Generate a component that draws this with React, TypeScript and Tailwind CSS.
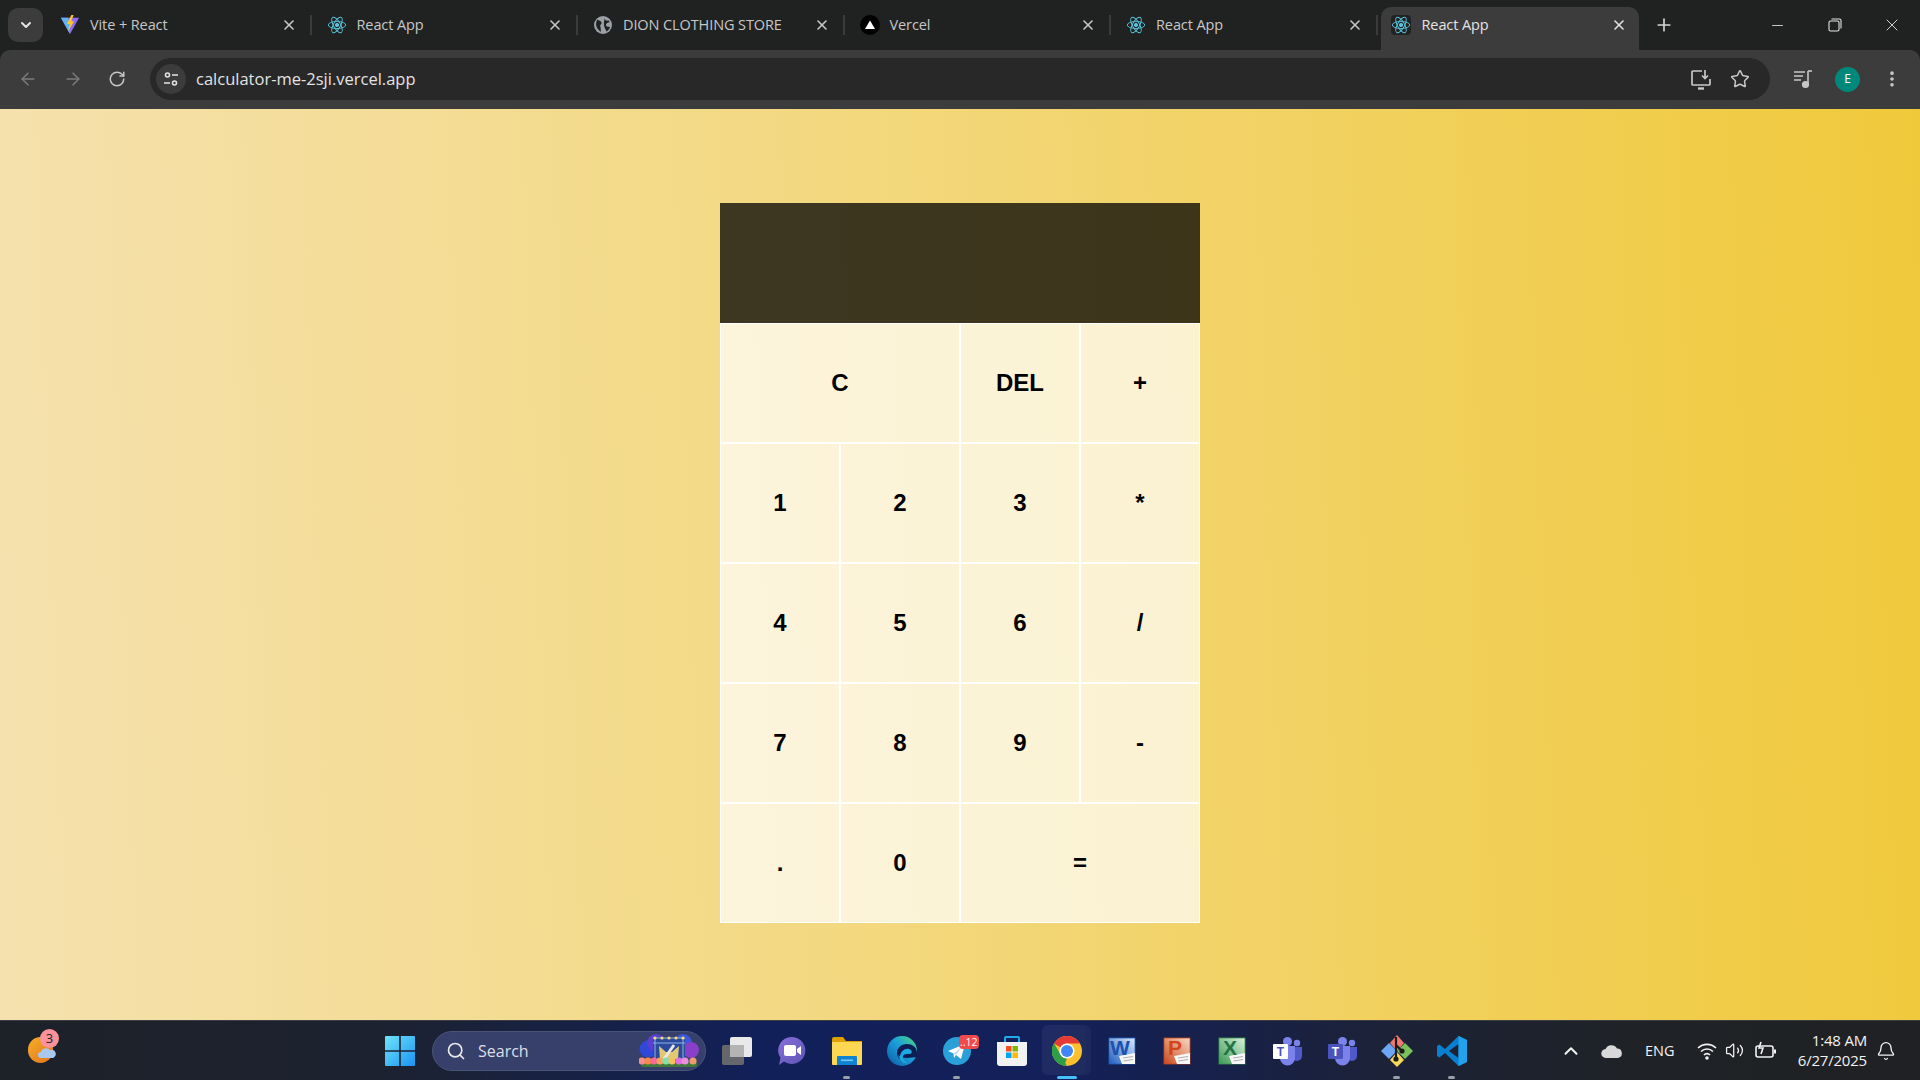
import React from "react";
import { ArrowLeft, ArrowRight, RotateCw, X, Plus, Minus, Star, Search, ChevronUp, ChevronDown, Bell, Volume2, EllipsisVertical } from "lucide-react";

const Atom = ({ boxed }: { boxed?: boolean }) => (
  <svg width="20" height="20" viewBox="-12 -12 24 24" fill="none" stroke="#58c4dc" strokeWidth="1.1" className={boxed ? "bg-[#222] rounded-sm" : ""}>
    <circle r="2" fill="#58c4dc" />
    <ellipse rx="10.5" ry="4.2" />
    <ellipse rx="10.5" ry="4.2" transform="rotate(60)" />
    <ellipse rx="10.5" ry="4.2" transform="rotate(120)" />
  </svg>
);

const ViteIcon = () => (
  <svg width="22" height="22" viewBox="0 0 22 22">
    <path d="M1 3 L21 3 L11 21 Z" fill="#8f6cf7" />
    <path d="M1 3 L9 3 L11 21 Z" fill="#5fb4f6" />
    <path d="M12.5 0 L7.5 10 L10.5 10 L9 18 L15.5 7 L12.5 7 L15 0 Z" fill="#fdc81f" />
  </svg>
);

const GlobeIcon = () => (
  <svg width="18" height="18" viewBox="0 0 18 18">
    <circle cx="9" cy="9" r="9" fill="#9aa0a6" />
    <path d="M3 3.5 C5 5 7 4.5 7.5 6.5 C8 8.5 5.5 8.5 6.5 11 C7 12.5 6.5 14 7 16 C4 14 2 11 2 8 Z M11 2 C10.5 4 12 5 14.5 4.5 L15.8 6 C13.5 6.5 11.5 7.5 12 9.5 C12.5 11 15 10.5 16 11 C15.5 13 14 14.5 12.5 15.5 C11.5 13 10 11 10 9 C9.8 7 10 4 11 2 Z" fill="#202222" />
  </svg>
);

const VercelIcon = () => (
  <svg width="20" height="20" viewBox="0 0 20 20">
    <circle cx="10" cy="10" r="10" fill="#000" />
    <path d="M10 5.5 L15 14 L5 14 Z" fill="#fff" />
  </svg>
);

const tabs = [
  { title: "Vite + React", icon: <ViteIcon /> },
  { title: "React App", icon: <Atom /> },
  { title: "DION CLOTHING STORE", icon: <GlobeIcon /> },
  { title: "Vercel", icon: <VercelIcon /> },
  { title: "React App", icon: <Atom /> },
];

const Tab = ({ title, icon }: { title: string; icon: React.ReactNode }) => (
  <div className="w-[266.5px] h-full flex items-center shrink-0">
    <div className="w-5 ml-[15px] flex justify-center">{icon}</div>
    <span className="ml-[10px] flex-1 text-[14.5px] text-[#c7c7c7] tracking-[-0.1px]">{title}</span>
    <X size={16} strokeWidth={2.4} className="text-[#c7c7c7] mr-[13px]" />
    <div className="w-[2px] h-5 bg-[#3a3c3c]" />
  </div>
);

const TabStrip = () => (
  <div className="h-[50px] bg-[#202222] flex items-stretch shrink-0 font-['Open_Sans',sans-serif]">
    <div className="w-[45px] flex items-center">
      <div className="ml-2 w-[35px] h-[34px] rounded-[10px] bg-[#3c3c3c] flex items-center justify-center">
        <ChevronDown size={16} strokeWidth={3} className="text-[#e3e3e3]" />
      </div>
    </div>
    {tabs.map((t, i) => (
      <Tab key={i} title={t.title} icon={t.icon} />
    ))}
    <div className="relative mt-[7px] ml-[3px] w-[258px] bg-[#3c3c3c] rounded-t-[10px] flex items-center pb-[7px] text-[#e3e3e3]">
      <div className="ml-[10px]"><Atom boxed /></div>
      <span className="ml-[11px] flex-1 text-[14.5px] tracking-[-0.1px]">React App</span>
      <X size={16} strokeWidth={2.4} className="mr-[12px]" />
    </div>
    <div className="flex items-center ml-[15px]">
      <Plus size={20} strokeWidth={2} className="text-[#d5d5d5]" />
    </div>
    <div className="ml-auto flex items-center text-[#e3e3e3]">
      <div className="w-[57px] flex justify-center"><Minus size={17} strokeWidth={1.2} /></div>
      <div className="w-[57px] flex justify-center">
        <svg width="14" height="14" viewBox="0 0 14 14" fill="none" stroke="currentColor" strokeWidth="1.1">
          <rect x="1" y="3" width="10" height="10" rx="1.5" />
          <path d="M3.5 1 H11.5 A1.5 1.5 0 0 1 13 2.5 V10.5" />
        </svg>
      </div>
      <div className="w-[57px] flex justify-center"><X size={20} strokeWidth={1.1} /></div>
    </div>
  </div>
);

const Toolbar = () => (
  <div className="h-[59px] bg-[#202222] shrink-0">
    <div className="h-full bg-[#3c3c3c] rounded-t-[10px] flex items-center">
      <div className="w-[150px] flex items-center pl-[18px] gap-[25px] -mt-[1px]">
        <ArrowLeft size={20} strokeWidth={1.8} className="text-[#7b7b7b]" />
        <ArrowRight size={20} strokeWidth={1.8} className="text-[#7b7b7b]" />
        <RotateCw size={18} strokeWidth={2} className="text-[#c7c7c7]" />
      </div>
      <div className="w-[1620px] h-[42px] -mt-[1px] bg-[#282828] rounded-full flex items-center">
        <div className="ml-[6px] w-[30px] h-[30px] rounded-full bg-[#3c3c3c] flex items-center justify-center">
          <svg width="16" height="16" viewBox="0 0 16 16" fill="none" stroke="#e3e3e3" strokeWidth="1.6">
            <circle cx="4.5" cy="4" r="2" />
            <path d="M9 4 H15 M1 12 H7" />
            <circle cx="11.5" cy="12" r="2" />
          </svg>
        </div>
        <span className="ml-[10px] flex-1 font-['Open_Sans',sans-serif] text-[16.5px] text-[#e3e3e3]">calculator-me-2sji.vercel.app</span>
        <svg width="22" height="22" viewBox="0 0 22 22" fill="none" stroke="#c7c7c7" strokeWidth="1.7">
          <path d="M12 3 H3 A1 1 0 0 0 2 4 V16 A1 1 0 0 0 3 17 H19 A1 1 0 0 0 20 16 V11" />
          <path d="M8 20.5 H14" strokeWidth="2.4" />
          <path d="M15 2 V10 M12 7.5 L15 10.5 L18 7.5" />
        </svg>
        <Star size={20} strokeWidth={1.8} className="ml-[18px] mr-[20px] text-[#c7c7c7]" />
      </div>
      <div className="flex items-center -mt-[1px]">
        <svg width="20" height="20" viewBox="0 0 20 20" className="ml-[23px] text-[#c7c7c7]" fill="none" stroke="currentColor" strokeWidth="1.6">
          <path d="M1 3 H12 M1 7 H10 M1 11 H8" />
          <path d="M15 2 V15" />
          <path d="M15 2 H19" />
          <circle cx="12.5" cy="15.5" r="2.8" fill="currentColor" />
        </svg>
        <div className="ml-[22px] w-[25px] h-[25px] rounded-full bg-[#00897b] text-white text-[12px] font-['Open_Sans',sans-serif] flex items-center justify-center">E</div>
        <EllipsisVertical size={20} strokeWidth={2.4} className="ml-[22px] text-[#c7c7c7]" />
      </div>
    </div>
  </div>
);

const keys = [
  { k: "C", wide: true }, { k: "DEL" }, { k: "+" },
  { k: "1" }, { k: "2" }, { k: "3" }, { k: "*" },
  { k: "4" }, { k: "5" }, { k: "6" }, { k: "/" },
  { k: "7" }, { k: "8" }, { k: "9" }, { k: "-" },
  { k: "." }, { k: "0" }, { k: "=", wide: true },
];

const Calculator = () => (
  <div className="grid grid-cols-[repeat(4,120px)] auto-rows-[120px] font-['Liberation_Sans',sans-serif]">
    <div className="col-span-4 bg-black/75" />
    {keys.map((b) => (
      <button
        key={b.k}
        className={`border border-white bg-white/70 text-[24px] font-bold text-black ${b.wide ? "col-span-2" : ""}`}
      >
        {b.k}
      </button>
    ))}
  </div>
);

const WinLogo = () => (
  <svg width="30" height="30" viewBox="0 0 30 30">
    <defs>
      <linearGradient id="win" x1="0" y1="0" x2="1" y2="1">
        <stop offset="0" stopColor="#6fe3fb" />
        <stop offset="1" stopColor="#1a94f0" />
      </linearGradient>
    </defs>
    <path d="M0 1 A1 1 0 0 1 1 0 H14.2 V14.2 H0 Z M15.8 0 H29 A1 1 0 0 1 30 1 V14.2 H15.8 Z M0 15.8 H14.2 V30 H1 A1 1 0 0 1 0 29 Z M15.8 15.8 H30 V29 A1 1 0 0 1 29 30 H15.8 Z" fill="url(#win)" />
  </svg>
);

const SearchArt = () => (
  <svg width="60" height="33" viewBox="0 0 60 33">
    <circle cx="9" cy="15" r="8.5" fill="#2f48d8" />
    <circle cx="17" cy="9" r="9" fill="#5b3fd0" />
    <circle cx="44" cy="9" r="9" fill="#3f56e0" />
    <circle cx="52" cy="16" r="8" fill="#8a3fc8" />
    <rect x="14" y="4" width="32" height="22" fill="#2c4a9c" />
    <path d="M14 4 H46 M14 9 H46 M16 4 V26 M44 4 V26" stroke="#8fb0e8" strokeWidth="1" />
    <path d="M21 25 L20 12 L27 18 H33 L40 12 L39 25 Z" fill="#e2c870" />
    <path d="M25 25 L35 11" stroke="#e8e8e8" strokeWidth="3" />
    {[16, 23, 30, 37, 44].map((x) => <circle key={x} cx={x} cy="4" r="1.6" fill="#f7dc6e" />)}
    <rect x="2" y="28" width="56" height="5" rx="2.5" fill="#3f7a3a" />
    {[["#f58f8f", 3], ["#f58a4a", 9], ["#f46a9a", 15], ["#f7a35c", 21], ["#7fe0b0", 27], ["#f7c05c", 33], ["#e070e0", 40], ["#e88fe0", 46], ["#f09a70", 54]].map(([c, x]) => (
      <circle key={x as number} cx={x as number} cy="27" r="3.6" fill={c as string} />
    ))}
  </svg>
);

const TaskView = () => (
  <svg width="30" height="28" viewBox="0 0 30 28">
    <rect x="8" y="0" width="22" height="20" rx="2" fill="#e9e9e9" />
    <rect x="0" y="8" width="22" height="20" rx="2" fill="#6e6e6e" fillOpacity="0.92" />
    <rect x="8" y="8" width="14" height="12" fill="#b4b4b4" />
  </svg>
);

const MeetIcon = () => (
  <svg width="30" height="30" viewBox="0 0 30 30">
    <defs>
      <linearGradient id="meet" x1="0" y1="0" x2="1" y2="1">
        <stop offset="0" stopColor="#8a6fd8" />
        <stop offset="1" stopColor="#5b55b5" />
      </linearGradient>
    </defs>
    <path d="M15 1 A13.5 13.5 0 1 1 7 25.5 L2 29 L3.5 22 A13.5 13.5 0 0 1 15 1 Z" fill="url(#meet)" />
    <rect x="7" y="9" width="12" height="11" rx="2" fill="#fff" />
    <path d="M20 13 L24 10 V19 L20 16 Z" fill="#fff" />
  </svg>
);

const FolderIcon = () => (
  <svg width="30" height="28" viewBox="0 0 30 28">
    <path d="M0 2 A2 2 0 0 1 2 0 H11 L14 4 H30 V10 H0 Z" fill="#e0a000" />
    <path d="M0 5 H30 V27 A1 1 0 0 1 29 28 H1 A1 1 0 0 1 0 27 Z" fill="#fdd652" />
    <path d="M5 20 A1 1 0 0 1 6 19 H24 A1 1 0 0 1 25 20 V28 H5 Z" fill="#0d83d1" />
    <rect x="9" y="22.5" width="12" height="1.6" fill="#7cc6f2" />
  </svg>
);

const EdgeIcon = () => (
  <svg width="30" height="30" viewBox="0 0 30 30">
    <defs>
      <linearGradient id="edge" x1="0" y1="1" x2="1" y2="0">
        <stop offset="0" stopColor="#0c59a4" />
        <stop offset="0.55" stopColor="#1ba0da" />
        <stop offset="1" stopColor="#4fdc7b" />
      </linearGradient>
    </defs>
    <circle cx="15" cy="15" r="15" fill="url(#edge)" />
    <path d="M30 17 C30 11 25 8 20 8 C14 8 10 12 10 17 C10 23 16 27 22 26 C17 27 12 24 11 19 C13 21 16 22 20 22 L30 21 Z" fill="#0f1d55" />
    <path d="M13 20 C14 15 18 12 22 13 C25 14 26 17 23 18 C19 18 17 18 16 20 C15 23 18 26 22 27 C17 28 12 25 13 20 Z" fill="#1ca8e0" />
  </svg>
);

const TelegramIcon = () => (
  <svg width="28" height="28" viewBox="0 0 28 28">
    <circle cx="14" cy="14" r="14" fill="#2aa0d8" />
    <path d="M5 14 L22 7 L18 22 L13 18 L11 21 L10.5 16.5 Z" fill="#fff" />
    <path d="M10.5 16.5 L18 11 L13 18 Z" fill="#c8daea" />
  </svg>
);

const StoreIcon = () => (
  <svg width="30" height="30" viewBox="0 0 30 30">
    <path d="M8 6 V2 A1 1 0 0 1 9 1 H21 A1 1 0 0 1 22 2 V6" fill="none" stroke="#22a9e8" strokeWidth="2" />
    <path d="M0 6 H30 V27 A3 3 0 0 1 27 30 H3 A3 3 0 0 1 0 27 Z" fill="#f2f2f2" />
    <rect x="9" y="10" width="5.5" height="5.5" fill="#f25022" />
    <rect x="15.5" y="10" width="5.5" height="5.5" fill="#7fba00" />
    <rect x="9" y="16.5" width="5.5" height="5.5" fill="#00a4ef" />
    <rect x="15.5" y="16.5" width="5.5" height="5.5" fill="#ffb900" />
  </svg>
);

const ChromeIcon = () => (
  <svg width="30" height="30" viewBox="-15 -15 30 30">
    <circle r="15" fill="#fbc02d" />
    <path d="M0 -15 A15 15 0 0 1 13 -7.5 L0 -7.5 A7.5 7.5 0 0 0 -6.5 -3.75 L-13 -7.5 A15 15 0 0 1 0 -15 Z" fill="#e53935" />
    <path d="M-13 -7.5 L-6.5 3.75 L0 15 A15 15 0 0 1 -13 -7.5 Z" fill="#43a047" />
    <path d="M-13 -7.5 L-6.5 3.75 A7.5 7.5 0 0 0 0 7.5 L-3 14.7 A15 15 0 0 1 -13 -7.5 Z" fill="#2e9e48" />
    <circle r="7.6" fill="#fff" />
    <circle r="6" fill="#4285f4" />
  </svg>
);

const OfficeIcon = ({ id, dark, light, letter, color }: { id: string; dark: string; light: string; letter: string; color: string }) => (
  <svg width="28" height="28" viewBox="0 0 28 28">
    <defs>
      <linearGradient id={id} x1="0" y1="1" x2="1" y2="0">
        <stop offset="0" stopColor={dark} />
        <stop offset="1" stopColor={light} />
      </linearGradient>
    </defs>
    <rect x="1" y="1" width="26" height="26" fill={`url(#${id})`} stroke={dark} strokeWidth="0.8" />
    <path d="M11 19 L27 16 V27 H14 Z" fill="#f7f7f7" />
    <path d="M15 21 L25 19.5 M15.5 24 L25 22.5" stroke="#9a9a9a" strokeWidth="0.8" />
    <text x="12" y="18" fontSize="21" fontWeight="bold" fontFamily="Liberation Sans, sans-serif" textAnchor="middle" fill={color}>{letter}</text>
  </svg>
);

const TeamsIcon = ({ plate }: { plate: string }) => (
  <svg width="30" height="30" viewBox="0 0 30 30">
    <circle cx="25" cy="7" r="3.2" fill="#7b83eb" />
    <path d="M20 11 H30 V20 A5 5 0 0 1 20 20 Z" fill="#5059c9" />
    <circle cx="15.5" cy="5.5" r="4.5" fill="#7b83eb" />
    <path d="M8 10 H23 V22 A7.5 7.5 0 0 1 8 22 Z" fill="#7b83eb" />
    <rect x="1" y="8" width="15" height="15" fill={plate} rx="1" />
    <text x="8.5" y="20" fontSize="12" fontWeight="bold" fontFamily="Liberation Sans, sans-serif" textAnchor="middle" fill={plate === "#fff" ? "#4b53bc" : "#fff"}>T</text>
  </svg>
);

const GitIcon = () => (
  <svg width="32" height="32" viewBox="0 0 32 32">
    <path d="M16 0 L23 8 L16 16 L9 8 Z" fill="#f07a72" />
    <path d="M8 8 L16 16 L8 24 L0 16 Z" fill="#6ca6f5" />
    <path d="M24 8 L32 16 L24 24 L16 16 Z" fill="#7ac25b" />
    <path d="M16 17 L23 25 L16 32 L9 25 Z" fill="#f6d85b" />
    <path d="M15 2 L15 23 M15 10 L21 16" stroke="#1c1c1c" strokeWidth="2.2" fill="none" />
    <circle cx="15" cy="24" r="2.6" fill="#1c1c1c" />
    <circle cx="21" cy="16" r="2.6" fill="#1c1c1c" />
  </svg>
);

const VsCodeIcon = () => (
  <svg width="30" height="30" viewBox="0 0 30 30">
    <path d="M21.5 0 L30 4 V26 L21.5 30 L8 17 L2.5 21.5 L0 20 V10 L2.5 8.5 L8 13 Z M21.5 8 L12 15 L21.5 22 Z" fill="#0a7fd0" />
    <path d="M21.5 0 L30 4 V26 L21.5 30 Z" fill="#22a2ec" />
  </svg>
);

const Slot = ({ children, dot, active, badge }: { children: React.ReactNode; dot?: boolean; active?: boolean; badge?: string }) => (
  <div className="relative w-[55px] h-[59px] flex items-center justify-center shrink-0">
    {active && <div className="absolute left-[3px] top-[4px] w-[44px] h-[50px] rounded-md bg-white/5 shadow-[5px_0_0_rgba(255,255,255,0.04)]" />}
    <div className="relative flex">{children}</div>
    {badge && (
      <div className="absolute left-[30px] top-[14px] h-[14px] px-[1px] rounded-[4px] bg-[#f04a4a] text-white text-[10.5px] leading-[14px] font-['Open_Sans',sans-serif]">{badge}</div>
    )}
    {dot && <div className="absolute bottom-[1px] w-[7px] h-[3px] rounded-full bg-[#9aa0a8]" />}
    {active && <div className="absolute bottom-[1px] w-[20px] h-[3px] rounded-full bg-[#47c1fb]" />}
  </div>
);

const Taskbar = () => (
  <div className="relative h-[60px] shrink-0 border-t border-[#3b3d42] bg-[linear-gradient(90deg,#1d2128_0%,#1c2230_20%,#12205a_40%,#13205a_55%,#1c2238_72%,#1f2226_85%,#1f2124_100%)] flex items-center font-['Open_Sans',sans-serif] text-white">
    <div className="relative w-[385px] h-full shrink-0">
      <div className="absolute left-[28px] top-[16px] w-[25px] h-[26px] rounded-full bg-[linear-gradient(135deg,#f7b02a,#e2701c)]" />
      <svg width="18" height="10" viewBox="0 0 18 10" className="absolute left-[38px] top-[27px]">
        <path d="M3 10 A3 3 0 0 1 3 4 A5 4 0 0 1 12 2 A4 4 0 0 1 15 10 Z" fill="#a8c8f0" />
      </svg>
      <div className="absolute left-[40px] top-[8px] w-[19px] h-[19px] rounded-full bg-[#f9929a] text-[#222] text-[13px] leading-[19px] text-center">3</div>
    </div>
    <WinLogo />
    <div className="ml-[17px] w-[274px] h-[40px] rounded-full bg-[#36406b] border border-[#4a5378] flex items-center shrink-0">
      <Search size={20} strokeWidth={2} className="ml-[13px] text-[#e8e8e8]" />
      <span className="ml-[12px] flex-1 text-[16px] text-[#dcdfe8]">Search</span>
      <div className="mr-[6px] flex"><SearchArt /></div>
    </div>
    <div className="ml-[3px] flex items-center">
      <Slot><TaskView /></Slot>
      <Slot><MeetIcon /></Slot>
      <Slot dot><FolderIcon /></Slot>
      <Slot><EdgeIcon /></Slot>
      <Slot dot badge="..12"><TelegramIcon /></Slot>
      <Slot><StoreIcon /></Slot>
      <Slot active><ChromeIcon /></Slot>
      <Slot><OfficeIcon id="word" dark="#1f5fc0" light="#dfe9f8" letter="W" color="#1a52b0" /></Slot>
      <Slot><OfficeIcon id="ppt" dark="#c9481c" light="#fbd9c4" letter="P" color="#d3461b" /></Slot>
      <Slot><OfficeIcon id="xls" dark="#3a9a52" light="#dcf0dc" letter="X" color="#217346" /></Slot>
      <Slot><TeamsIcon plate="#fff" /></Slot>
      <Slot><TeamsIcon plate="#4b53bc" /></Slot>
      <Slot dot><GitIcon /></Slot>
      <Slot dot><VsCodeIcon /></Slot>
    </div>
    <div className="ml-[81px] flex items-center text-[#f2f2f2]">
      <ChevronUp size={22} strokeWidth={2.2} />
      <svg width="22" height="14" viewBox="0 0 22 14" className="ml-[19px]">
        <path d="M5 14 A4.5 4.5 0 0 1 4.5 5 A6.5 6.5 0 0 1 16 4.5 A4.8 4.8 0 0 1 17 14 Z" fill="#d8d8d8" />
      </svg>
      <span className="ml-[22px] text-[14.5px] w-[34px]">ENG</span>
      <svg width="20" height="18" viewBox="0 0 20 18" fill="none" stroke="currentColor" strokeWidth="1.6" className="ml-[18px]">
        <path d="M1 6 A13 13 0 0 1 19 6 M4 9.5 A8.5 8.5 0 0 1 16 9.5 M7 13 A4 4 0 0 1 13 13" />
        <circle cx="10" cy="16" r="1" fill="currentColor" />
      </svg>
      <Volume2 size={19} strokeWidth={1.6} className="ml-[8px]" />
      <svg width="22" height="20" viewBox="0 0 22 20" fill="none" stroke="currentColor" strokeWidth="1.6" className="ml-[11px]">
        <rect x="1" y="5" width="17" height="11" rx="2" />
        <path d="M20 8.5 V12.5" strokeWidth="2" />
        <path d="M6 1 L4 7 H8 L6 13" />
      </svg>
      <div className="ml-[11px] w-[79px] text-right text-[15px] leading-[20px] tracking-[-0.2px] -mt-[2px]">
        <div>1:48 AM</div>
        <div>6/27/2025</div>
      </div>
      <Bell size={20} strokeWidth={1.6} className="ml-[9px]" />
    </div>
  </div>
);

export default function App() {
  return (
    <div className="h-screen w-full flex flex-col overflow-hidden">
      <TabStrip />
      <Toolbar />
      <main className="flex-1 min-h-0 pb-[3px] flex items-center justify-center bg-[linear-gradient(88deg,#f5e1ae_0%,#f3d984_40%,#f0c93b_100%)]">
        <Calculator />
      </main>
      <Taskbar />
    </div>
  );
}
